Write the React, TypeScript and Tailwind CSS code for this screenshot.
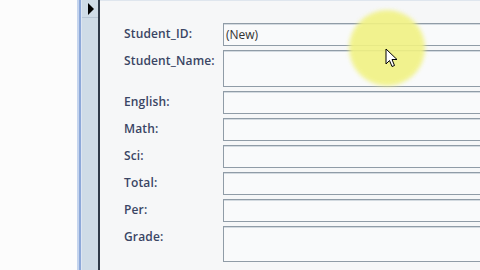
import React from "react";

const rows: { label: string; h: number; value?: string }[] = [
  { label: "Student_ID:", h: 23, value: "(New)" },
  { label: "Student_Name:", h: 37 },
  { label: "English:", h: 23 },
  { label: "Math:", h: 23 },
  { label: "Sci:", h: 23 },
  { label: "Total:", h: 23 },
  { label: "Per:", h: 23 },
  { label: "Grade:", h: 36 },
];

export default function App() {
  return (
    <div
      className="w-[480px] h-[270px] flex overflow-hidden bg-[#fdfdfd]"
      style={{ fontFamily: '"Open Sans", "Noto Sans", sans-serif' }}
    >
      <div className="w-[77px] shrink-0 bg-[#fcfcfc]" />
      <div className="w-[2px] shrink-0 bg-[#c4d4ee]" />
      <div className="w-[2px] shrink-0 bg-[#8ea9d9]" />
      <div className="w-[1px] shrink-0 bg-[#dde6f2]" />
      <div className="w-[16px] shrink-0 bg-[#cfdce7] flex flex-col">
        <div className="h-[18px] border-b border-[#b8c7d6] flex items-start justify-center pt-[3px] pl-[1px]">
          <svg width="6" height="12" viewBox="0 0 6 12">
            <path d="M0 0 L6 6 L0 12 Z" fill="#000" />
          </svg>
        </div>
      </div>
      <div className="w-[2px] shrink-0 bg-[#2f3a48]" />
      <div className="flex-1 relative bg-[#f6f7f8] border-t border-[#dfe6ee] overflow-hidden">
        <div className="pt-[22px] pl-[24px] grid grid-cols-[99px_1fr] gap-y-[4px]">
          {rows.map((r) => (
            <React.Fragment key={r.label}>
              <div className="text-[12px] font-semibold text-[#3a4564] leading-none pt-[5px] tracking-[0.15px]">
                {r.label}
              </div>
              <div
                className="border border-[#909ca7] bg-[#f9fafb] shadow-[inset_0_1px_0_#d3dae0] -mr-[10px] text-[12px] text-[#333] leading-none pl-[2px] pt-[5px]"
                style={{ height: r.h }}
              >
                {r.value}
              </div>
            </React.Fragment>
          ))}
        </div>
        <div className="absolute left-[249px] top-[9px] w-[76px] h-[76px] rounded-full bg-[#f1f283] opacity-90 blur-[2px]" />
        <svg className="absolute left-[285px] top-[47px]" width="14" height="22" viewBox="0 0 14 22">
          <path
            d="M1 1 L1 16 L4.5 12.5 L7 18.5 L9.5 17.5 L7 11.5 L12 11.5 Z"
            fill="#fff"
            stroke="#000"
            strokeWidth="1"
            strokeLinejoin="round"
          />
        </svg>
      </div>
    </div>
  );
}
